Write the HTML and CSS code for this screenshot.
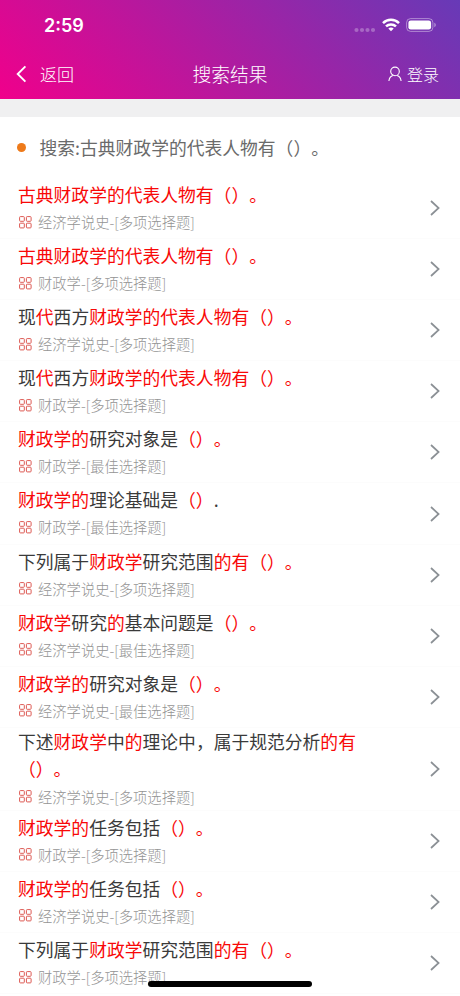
FILE: index.html
```html
<!DOCTYPE html>
<html lang="zh-CN">
<head>
<meta charset="utf-8">
<title>搜索结果</title>
<link rel="stylesheet" href="styles.css">
</head>
<body>
<svg class="defs" width="0" height="0">
  <symbol id="grid" viewBox="0 0 13 13"><g fill="none" stroke="#dd5953" stroke-width="1"><rect x=".6" y=".6" width="4.7" height="4.7" rx=".8"/><rect x="7.4" y=".6" width="4.7" height="4.7" rx=".8"/><rect x=".6" y="7.2" width="4.7" height="4.7" rx=".8"/><rect x="7.4" y="7.2" width="4.7" height="4.7" rx=".8"/></g></symbol>
  <symbol id="next" viewBox="0 0 10 16"><path d="M1 1l7.6 7L1 15" fill="none" stroke="#8b9095" stroke-width="1.7"/></symbol>
</svg>
<header class="header">
  <div class="status">
    <span class="time">2:59</span>
    <div class="signals">
      <svg width="22" height="6" viewBox="0 0 22 6" fill="#fff" opacity=".28"><circle cx="2.5" cy="3" r="2.1"/><circle cx="8" cy="3" r="2.1"/><circle cx="13.5" cy="3" r="2.1"/><circle cx="19" cy="3" r="2.1"/></svg>
      <svg class="wifi" width="18" height="14" viewBox="0 0 18 14" fill="none" stroke="#fff" stroke-width="2.5"><path d="M1 5.1C5.4.7 12.6.7 17 5.1M4 8.4c2.8-2.7 7.2-2.7 10 0"/><path d="M9 13.3l-2.7-2.8c1.5-1.4 3.9-1.4 5.4 0z" fill="#fff" stroke="none"/></svg>
      <svg class="battery" width="31" height="14" viewBox="0 0 31 14"><rect x=".6" y=".6" width="26.3" height="12.8" rx="4" fill="none" stroke="#fff" stroke-opacity=".42"/><rect x="2.4" y="2.4" width="22.7" height="9.2" rx="2.4" fill="#fff"/><path d="M28.3 4.8c2 .7 2 3.7 0 4.4z" fill="#fff" fill-opacity=".45"/></svg>
    </div>
  </div>
  <nav class="nav">
    <div class="back"><svg width="11" height="18" viewBox="0 0 11 18"><path d="M9.4 1.4L1.7 9l7.7 7.6" fill="none" stroke="#fff" stroke-width="1.9"/></svg><span>返回</span></div>
    <h1>搜索结果</h1>
    <div class="login"><svg width="14" height="16" viewBox="0 0 14 16" fill="none" stroke="#fff" stroke-width="1.1"><circle cx="7" cy="5.4" r="4.3"/><path d="M.9 15c.3-2.6 1.8-4.8 4-5.5M13.1 15c-.3-2.6-1.8-4.8-4-5.5"/></svg><span>登录</span></div>
  </nav>
</header>
<div class="band"></div>
<main>
  <div class="query"><i class="dot"></i><span>搜索:古典财政学的代表人物有（）。</span></div>
  <ul class="results">
    <li><div class="body"><p class="title"><em>古典财政学的代表人物有（）。</em></p><p class="meta"><svg><use href="#grid"/></svg>经济学说史-[多项选择题]</p></div><svg class="next"><use href="#next"/></svg></li>
    <li><div class="body"><p class="title"><em>古典财政学的代表人物有（）。</em></p><p class="meta"><svg><use href="#grid"/></svg>财政学-[多项选择题]</p></div><svg class="next"><use href="#next"/></svg></li>
    <li><div class="body"><p class="title">现<em>代</em>西方<em>财政学的代表人物有（）。</em></p><p class="meta"><svg><use href="#grid"/></svg>经济学说史-[多项选择题]</p></div><svg class="next"><use href="#next"/></svg></li>
    <li><div class="body"><p class="title">现<em>代</em>西方<em>财政学的代表人物有（）。</em></p><p class="meta"><svg><use href="#grid"/></svg>财政学-[多项选择题]</p></div><svg class="next"><use href="#next"/></svg></li>
    <li><div class="body"><p class="title"><em>财政学的</em>研究对象是<em>（）。</em></p><p class="meta"><svg><use href="#grid"/></svg>财政学-[最佳选择题]</p></div><svg class="next"><use href="#next"/></svg></li>
    <li><div class="body"><p class="title"><em>财政学的</em>理论基础是<em>（）</em>.</p><p class="meta"><svg><use href="#grid"/></svg>财政学-[最佳选择题]</p></div><svg class="next"><use href="#next"/></svg></li>
    <li><div class="body"><p class="title">下列属于<em>财政学</em>研究范围<em>的有（）。</em></p><p class="meta"><svg><use href="#grid"/></svg>经济学说史-[多项选择题]</p></div><svg class="next"><use href="#next"/></svg></li>
    <li><div class="body"><p class="title"><em>财政学</em>研究<em>的</em>基本问题是<em>（）。</em></p><p class="meta"><svg><use href="#grid"/></svg>经济学说史-[最佳选择题]</p></div><svg class="next"><use href="#next"/></svg></li>
    <li><div class="body"><p class="title"><em>财政学的</em>研究对象是<em>（）。</em></p><p class="meta"><svg><use href="#grid"/></svg>经济学说史-[最佳选择题]</p></div><svg class="next"><use href="#next"/></svg></li>
    <li class="tall"><div class="body"><p class="title">下述<em>财政学</em>中<em>的</em>理论中，属于规范分析<em>的有<br>（）。</em></p><p class="meta"><svg><use href="#grid"/></svg>经济学说史-[多项选择题]</p></div><svg class="next"><use href="#next"/></svg></li>
    <li><div class="body"><p class="title"><em>财政学的</em>任务包括<em>（）。</em></p><p class="meta"><svg><use href="#grid"/></svg>财政学-[多项选择题]</p></div><svg class="next"><use href="#next"/></svg></li>
    <li><div class="body"><p class="title"><em>财政学的</em>任务包括<em>（）。</em></p><p class="meta"><svg><use href="#grid"/></svg>经济学说史-[多项选择题]</p></div><svg class="next"><use href="#next"/></svg></li>
    <li><div class="body"><p class="title">下列属于<em>财政学</em>研究范围<em>的有（）。</em></p><p class="meta"><svg><use href="#grid"/></svg>财政学-[多项选择题]</p></div><svg class="next"><use href="#next"/></svg></li>
  </ul>
</main>
<div class="home"></div>
</body>
</html>
```
FILE: styles.css
```css
* { box-sizing: border-box; margin: 0; padding: 0; }
html, body { height: 996px; overflow: hidden; }
body { width: 460px; background: #fff; color: #3a3a3a; font-family: "Noto Sans CJK SC", sans-serif; font-weight: 300; text-spacing-trim: space-all; }
.defs { position: absolute; }
svg { display: block; flex: none; }
.header { height: 99px; color: #fff; background: linear-gradient(45deg, #f0008b 0%, #673ab7 100%); }
.status { height: 50px; padding: 0 23px 0 44px; display: flex; align-items: center; justify-content: space-between; }
.time { font: 600 18px/22px Inter, sans-serif; padding-top: 2px; }
.signals { display: flex; align-items: center; }
.signals svg:first-child { margin-top: 9px; }
.wifi { margin-left: 6px; }
.battery { margin-left: 6px; }
.nav { height: 49px; padding: 0 20px 2px; display: grid; grid-template-columns: 1fr auto 1fr; align-items: center; font-size: 17px; line-height: 24px; }
.nav h1 { font-size: 18.8px; font-weight: 300; line-height: 26px; }
.back { display: flex; align-items: center; gap: 13px; margin-left: -4px; }
.login { display: flex; align-items: center; justify-content: flex-end; gap: 5px; font-size: 16px; padding-right: 1px; }
.band { height: 18px; background: #f0f0f1; }
.query { height: 61px; padding-left: 17px; display: flex; align-items: center; gap: 13.5px; font-size: 17.8px; font-weight: 400; color: #6a6a6a; }
.query span { padding-bottom: 2px; }
.dot { width: 9px; height: 9px; border-radius: 50%; background: #ee7a1a; }
.results { list-style: none; }
.results li { height: 61.1px; padding: 0 20px 0 18px; display: flex; align-items: center; justify-content: space-between; border-bottom: 1px solid #fcfcfc; }
.results .tall { height: 83px; }
.body { height: 100%; }
.title { font-size: 17.8px; font-weight: 400; line-height: 32px; padding-bottom: 1px; white-space: nowrap; }
.title em { font-style: normal; color: #f80808; }
.tall .title { line-height: 27px; padding: 0 0 1px; }
.meta { display: flex; align-items: center; gap: 6px; font-size: 14.3px; line-height: 22px; color: #949494; white-space: nowrap; }
.tall .meta { padding-top: 3px; }
.meta svg { width: 13px; height: 13px; margin: 0 0 0 1px; }
.next { width: 10px; height: 16px; }
.home { position: absolute; left: 148px; top: 981px; width: 164px; height: 6px; border-radius: 3px; background: #000; }
```
